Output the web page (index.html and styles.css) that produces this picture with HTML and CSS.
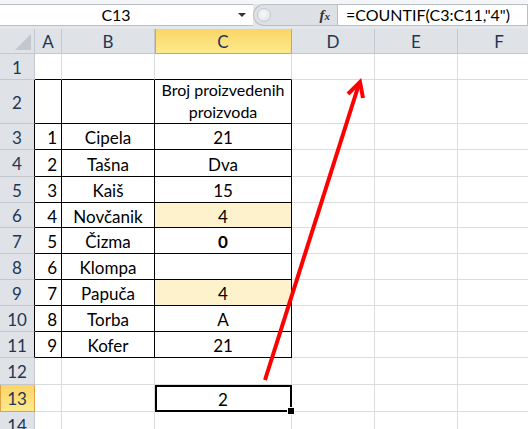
FILE: index.html
```html
<!DOCTYPE html>
<html>
<head>
<meta charset="utf-8">
<link rel="stylesheet" href="styles.css">
</head>
<body>
<div class="app">
  <div class="fbar">
    <div class="namebox"><span class="name">C13</span><span class="dd"></span></div>
    <div class="pill"><span class="knob"></span><span class="fx">f<span class="fxs">x</span></span></div>
    <div class="formula">=COUNTIF(C3:C11,"4")</div>
  </div>
  <div class="sheet">
    <div class="corner"><span class="tri"></span></div>
    <div class="ch">A</div><div class="ch">B</div><div class="ch act">C</div><div class="ch">D</div><div class="ch">E</div><div class="ch">F</div>

    <div class="rh">1</div><div class="c bb"></div><div class="c bb"></div><div class="c bb"></div><div class="c"></div><div class="c"></div><div class="c"></div>

    <div class="rh tb">2</div><div class="c t"></div><div class="c t"></div><div class="c t wrap">Broj proizvedenih proizvoda</div><div class="c"></div><div class="c"></div><div class="c"></div>

    <div class="rh tb">3</div><div class="c t num">1</div><div class="c t">Cipela</div><div class="c t">21</div><div class="c"></div><div class="c"></div><div class="c"></div>

    <div class="rh tb">4</div><div class="c t num">2</div><div class="c t">Tašna</div><div class="c t">Dva</div><div class="c"></div><div class="c"></div><div class="c"></div>

    <div class="rh tb">5</div><div class="c t num">3</div><div class="c t">Kaiš</div><div class="c t">15</div><div class="c"></div><div class="c"></div><div class="c"></div>

    <div class="rh tb">6</div><div class="c t num">4</div><div class="c t">Novčanik</div><div class="c t hl">4</div><div class="c"></div><div class="c"></div><div class="c"></div>

    <div class="rh tb">7</div><div class="c t num">5</div><div class="c t">Čizma</div><div class="c t bold">0</div><div class="c"></div><div class="c"></div><div class="c"></div>

    <div class="rh tb">8</div><div class="c t num">6</div><div class="c t">Klompa</div><div class="c t"></div><div class="c"></div><div class="c"></div><div class="c"></div>

    <div class="rh tb">9</div><div class="c t num">7</div><div class="c t">Papuča</div><div class="c t hl">4</div><div class="c"></div><div class="c"></div><div class="c"></div>

    <div class="rh tb">10</div><div class="c t num">8</div><div class="c t">Torba</div><div class="c t">A</div><div class="c"></div><div class="c"></div><div class="c"></div>

    <div class="rh tb">11</div><div class="c t num">9</div><div class="c t">Kofer</div><div class="c t">21</div><div class="c"></div><div class="c"></div><div class="c"></div>

    <div class="rh">12</div><div class="c"></div><div class="c"></div><div class="c"></div><div class="c"></div><div class="c"></div><div class="c"></div>

    <div class="rh act">13</div><div class="c"></div><div class="c"></div><div class="c sel">2</div><div class="c"></div><div class="c"></div><div class="c"></div>

    <div class="rh">14</div><div class="c"></div><div class="c"></div><div class="c"></div><div class="c"></div><div class="c"></div><div class="c"></div>
  </div>
  <svg class="arrow" width="528" height="429" viewBox="0 0 528 429">
    <line x1="265" y1="380" x2="359" y2="84" stroke="#ff0000" stroke-width="4"/>
    <polyline points="348,94 360,82 363,98" fill="none" stroke="#ff0000" stroke-width="4" stroke-linejoin="miter"/>
  </svg>
</div>
</body>
</html>
```

FILE: styles.css
```css
* { box-sizing: border-box; }
body { margin: 0; background: #fff; }
.app {
  position: relative;
  width: 528px;
  height: 429px;
  overflow: hidden;
  font-family: Lato, "Open Sans", sans-serif;
  font-size: 17px;
  color: #000;
}
.fbar {
  display: flex;
  height: 29px;
  padding: 4px 0 3px;
  background: linear-gradient(#f4f5f7 0 4px, #e3e6ea 4px);
}
.namebox {
  width: 253px;
  display: flex;
  align-items: center;
  background: #fff;
  border-top: 1px solid #b9bfc7;
  border-bottom: 1px solid #b9bfc7;
}
.name {
  width: 232px;
  text-align: center;
  font-size: 16px;
  line-height: 20px;
}
.dd {
  width: 0; height: 0;
  margin-left: 6px;
  border-left: 4px solid transparent;
  border-right: 4px solid transparent;
  border-top: 4px solid #333;
}
.pill {
  width: 84px;
  display: flex;
  align-items: center;
  background: #dde0e4;
  border: 1px solid #b9bfc7;
  border-right: none;
  border-radius: 11px 0 0 11px;
}
.knob {
  width: 14px; height: 14px;
  margin-left: 3px;
  border-radius: 50%;
  background: radial-gradient(circle at 40% 40%, #f6f7f8, #dfe2e5);
  border: 1px solid #c3c8ce;
}
.fx {
  margin-left: auto;
  margin-right: 7px;
  font-family: "Liberation Serif", serif;
  font-style: italic;
  font-weight: bold;
  font-size: 15px;
  color: #333;
  line-height: 18px;
}
.fxs { font-size: 11px; }
.formula {
  flex: 1;
  background: #fff;
  border: 1px solid #b9bfc7;
  padding-left: 8px;
  font-size: 16px;
  line-height: 19px;
  white-space: nowrap;
}
.sheet {
  display: grid;
  grid-template-columns: 35px 27px 93px 137px 83px 83px 83px;
  grid-template-rows: 25px 26px 44px 26px 27px 26px 25px 26px 26px 26px 26px 26px 27px 27px 26px;
}
.corner {
  position: relative;
  background: #dfe3e8;
  border-right: 1px solid #c3c8cf;
  border-bottom: 1px solid #c3c8cf;
}
.tri {
  position: absolute;
  right: 3px;
  bottom: 3px;
  width: 0; height: 0;
  border-left: 16px solid transparent;
  border-bottom: 16px solid #c4c8cd;
}
.ch, .rh {
  display: flex;
  align-items: center;
  justify-content: center;
  background: #dfe3e8;
  color: #1e3656;
  border-right: 1px solid #c3c8cf;
  border-bottom: 1px solid #c3c8cf;
  padding-top: 1px;
}
.ch.act, .rh.act {
  background: linear-gradient(#f9d565, #fee98e);
  border-right-color: #e0a243;
  border-bottom-color: #e0a243;
  box-shadow: inset 1px 0 0 #e0a243;
}
.rh.tb { border-right-color: #000; }
.c {
  position: relative;
  display: flex;
  align-items: center;
  justify-content: center;
  border-right: 1px solid #dadcdd;
  border-bottom: 1px solid #dadcdd;
  padding-top: 2px;
  white-space: nowrap;
}
.c.bb { border-bottom-color: #000; }
.c.t { border-right-color: #000; border-bottom-color: #000; }
.c.num { justify-content: flex-end; padding-right: 4px; }
.c.hl { background: #fef2cc; }
.c.bold { font-weight: bold; }
.c.wrap {
  white-space: normal;
  text-align: center;
  align-items: flex-end;
  line-height: 22px;
  padding: 0 4px 0;
  font-size: 16px;
}
.c.sel::after {
  content: "";
  position: absolute;
  left: 0; top: 0; right: -1px; bottom: -1px;
  border: 2px solid #000;
}
.c.sel::before {
  content: "";
  position: absolute;
  right: -4px; bottom: -4px;
  width: 6px; height: 6px;
  background: #000;
  border: 1px solid #fff;
  z-index: 2;
}
.arrow {
  position: absolute;
  left: 0; top: 0;
  pointer-events: none;
}
```
